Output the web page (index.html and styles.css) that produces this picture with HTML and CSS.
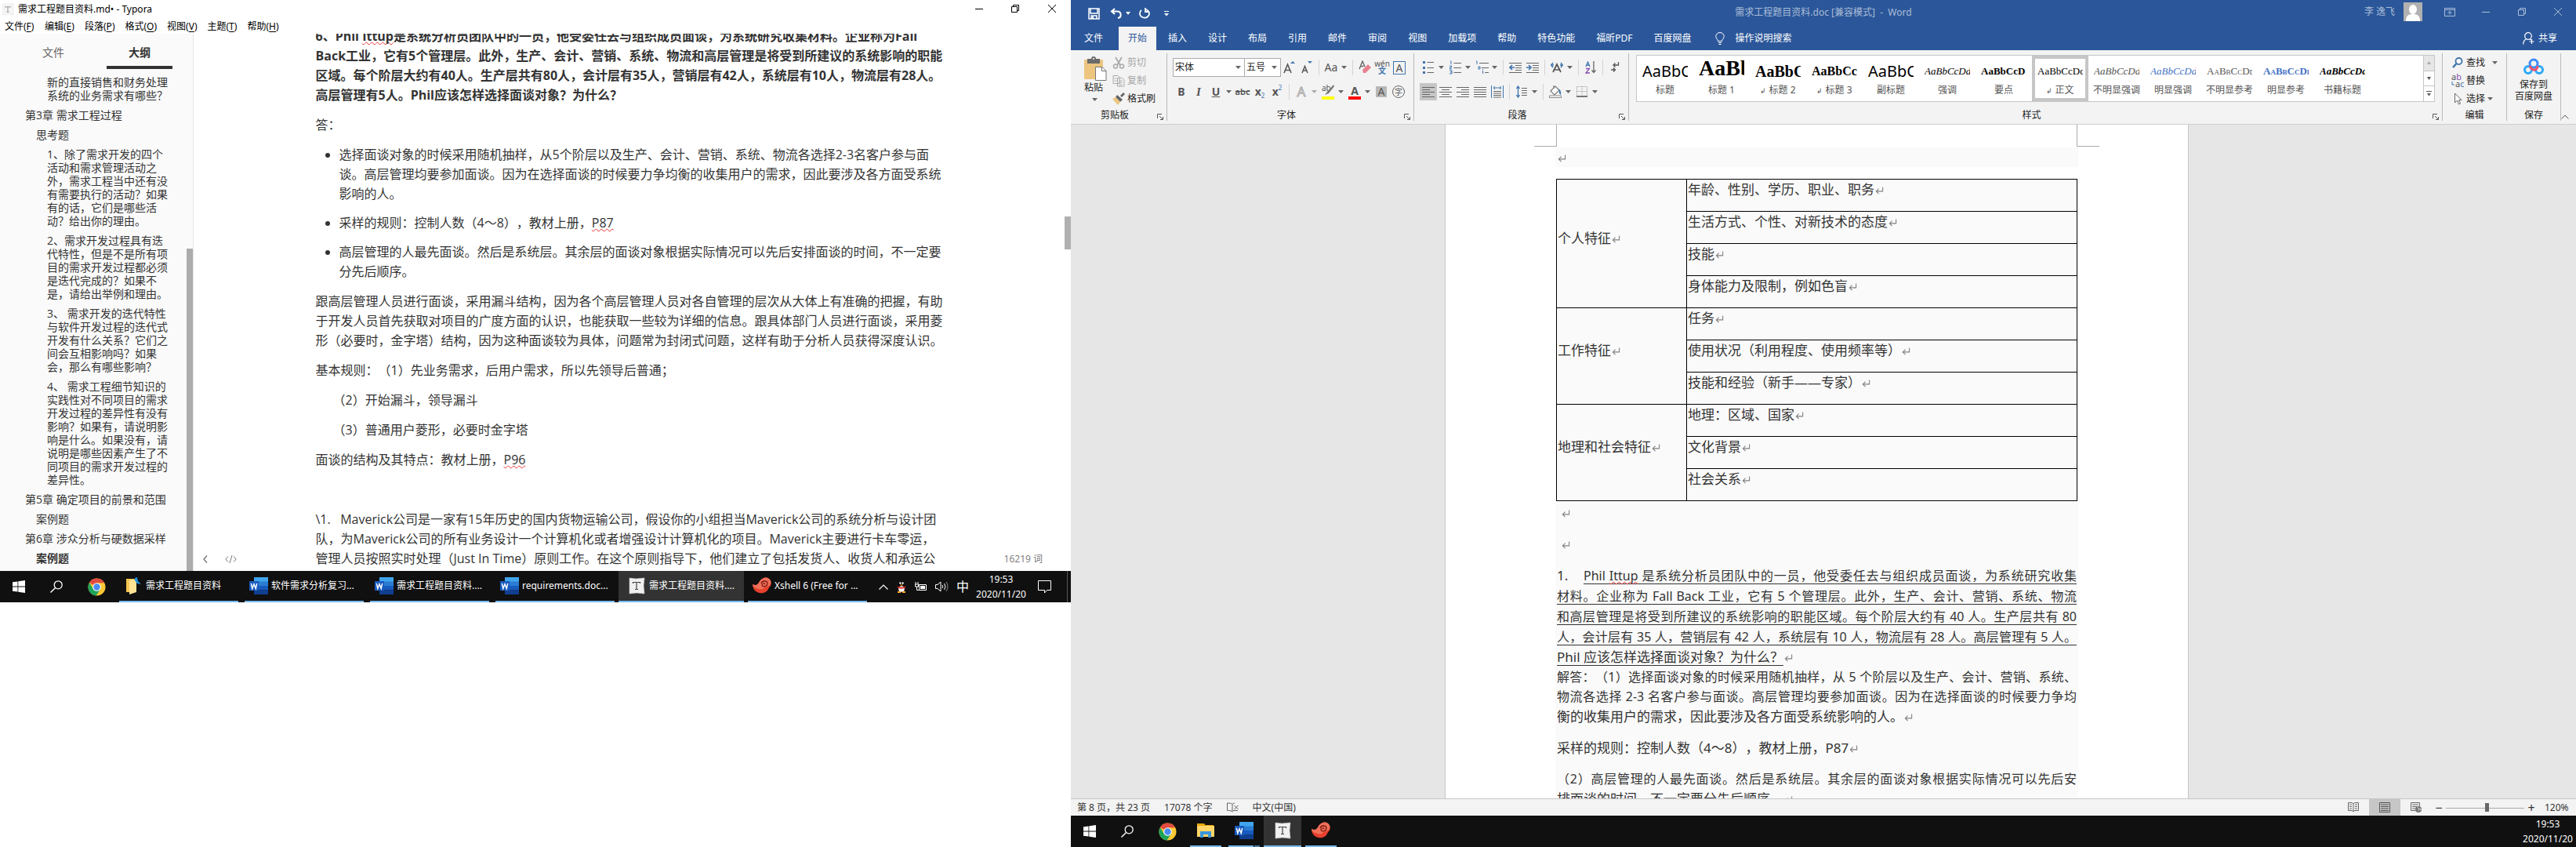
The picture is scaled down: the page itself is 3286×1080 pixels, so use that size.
FILE: index.html
```html
<!DOCTYPE html>
<html lang="zh-CN">
<head>
<meta charset="utf-8">
<title>桌面</title>
<link rel="stylesheet" href="styles.css">
</head>
<body>
<svg class="defs" aria-hidden="true">
  <symbol id="caret" viewBox="0 0 7 4"><path d="M0 0h7L3.500 4z" fill="#666"/></symbol>
  <symbol id="min" viewBox="0 0 10 10"><path d="M0 5.500h10" stroke="currentColor" fill="none"/></symbol>
  <symbol id="restore" viewBox="0 0 10 10"><path d="M.5 2.500h7v7h-7zM2.500 2.500v-2h7v7h-2" stroke="currentColor" fill="none"/></symbol>
  <symbol id="close" viewBox="0 0 10 10"><path d="M0 0l10 10M10 0L0 10" stroke="currentColor" fill="none"/></symbol>
  <symbol id="launch" viewBox="0 0 8 8"><path d="M.5 6V.5H6M3 3l4 4M7.500 4v3.500H4" stroke="#555" fill="none"/></symbol>
  <symbol id="ret" viewBox="0 0 12 10"><path d="M10.500 0v6H2M5 2.500L1.500 6 5 9.500" stroke="#808080" stroke-width="1.200" fill="none"/></symbol>
  <symbol id="win" viewBox="0 0 16 16"><path d="M0 2.300L6.500 1.400v6.100H0zM7.300 1.300L16 0v7.500H7.300zM0 8.400h6.500v6.200L0 13.700zM7.300 8.400H16V16l-8.700-1.300z" fill="#fff"/></symbol>
  <symbol id="search" viewBox="0 0 16 16"><circle cx="10.200" cy="5.800" r="5" stroke="#fff" stroke-width="1.300" fill="none"/><path d="M6.600 9.400L.5 15.500" stroke="#fff" stroke-width="1.400"/></symbol>
  <symbol id="chrome" viewBox="0 0 24 24"><circle cx="12" cy="12" r="11.500" fill="#fbc934"/><path d="M12 12L2 6.300A11.500 11.500 0 0 1 22 6.500H12z" fill="#e04a3f"/><path d="M2 6.300A11.500 11.500 0 0 0 11 23.500L16.700 14.800 12 12 7.300 14.500z" fill="#1da35a"/><circle cx="12" cy="12" r="5.500" fill="#fff"/><circle cx="12" cy="12" r="4.400" fill="#4a8af4"/></symbol>
  <symbol id="folder" viewBox="0 0 22 20"><path d="M0 1h9l1.500 2H21v4H0z" fill="#e8a80c"/><path d="M0 4h22v14H0z" fill="#ffd667"/><path d="M4 19v-8h14v8h-4v-4H8v4z" fill="#3c96dc"/></symbol>
  <symbol id="folder2" viewBox="0 0 20 22"><path d="M1 2h10v17H1z" fill="#f3c44f"/><path d="M5 4l9-2v17l-9 3z" fill="#ffe294"/><path d="M12 1l3-1 1 5 4 4-5-1-3-4z" fill="#1e90e4"/></symbol>
  <symbol id="word" viewBox="0 0 24 22"><path d="M6 0h18v6H6z" fill="#41a5ee"/><path d="M6 5.500h18V11H6z" fill="#2b7cd3"/><path d="M6 11h18v5.500H6z" fill="#185abd"/><path d="M6 16.500h18V22H6z" fill="#103f91"/><path d="M0 5h12v12H0z" fill="#185abd"/><path d="M2.300 7.800l1.500 6.600L6 8.800l2.200 5.600 1.500-6.600" stroke="#fff" stroke-width="1.500" fill="none"/></symbol>
  <symbol id="typ" viewBox="0 0 22 22"><path d="M2 1l8 1 11-1-1 10 1 10-10-1-9 1 0-9z" fill="#f0f0f0" stroke="#ccc" stroke-width=".6"/><path d="M6.500 8V6.500h9V8M11 6.500v9M9 15.500h4" stroke="#444" stroke-width="1.200" fill="none"/></symbol>
  <symbol id="xsh" viewBox="0 0 24 22"><path d="M0 9c4 2 6 1 8-2 3-6 9-8 13-5 4 3 3 9 0 11-2 6-7 8-12 7C3 19 0 14 0 9z" fill="#e8402d"/><path d="M0 9c4 2 6 1 8-2 3-6 9-8 13-5 4 3 3 9-3 10-5 1-4 5-10 3C3 14 0 12 0 9z" fill="#f0705a"/><path d="M11 8c1-4 8-4 8 0s-6 5-7 2c0-2 3-3 4-1" stroke="#7c1a14" stroke-width="1.300" fill="none"/></symbol>
  <symbol id="al" viewBox="0 0 16 14"><path d="M0 1.500h16M0 4.500h10M0 7.500h16M0 10.500h10M0 13.500h16" stroke="#666"/></symbol>
  <symbol id="ac" viewBox="0 0 16 14"><path d="M0 1.500h16M3 4.500h10M0 7.500h16M3 10.500h10M0 13.500h16" stroke="#666"/></symbol>
  <symbol id="ar" viewBox="0 0 16 14"><path d="M0 1.500h16M6 4.500h10M0 7.500h16M6 10.500h10M0 13.500h16" stroke="#666"/></symbol>
  <symbol id="aj" viewBox="0 0 16 14"><path d="M0 1.500h16M0 4.500h16M0 7.500h16M0 10.500h16M0 13.500h16" stroke="#666"/></symbol>
</svg>

<section class="screen left" aria-label="Typora">
  <header class="t-title">
    <svg width="16" height="16"><use href="#typ"/></svg><span>需求工程题目资料.md• - Typora</span>
    <div class="t-ctl">
      <button aria-label="最小化"><svg width="10" height="10"><use href="#min"/></svg></button>
      <button aria-label="还原"><svg width="10" height="10"><use href="#restore"/></svg></button>
      <button aria-label="关闭"><svg width="10" height="10"><use href="#close"/></svg></button>
    </div>
  </header>
  <nav class="t-menu">
    <button>文件(<u>F</u>)</button><button>编辑(<u>E</u>)</button><button>段落(<u>P</u>)</button><button>格式(<u>O</u>)</button><button>视图(<u>V</u>)</button><button>主题(<u>T</u>)</button><button>帮助(<u>H</u>)</button>
  </nav>
  <div class="t-body">
    <aside class="side">
      <div class="side-tabs"><button>文件</button><button class="on">大纲</button></div>
      <nav class="outline">
        <a href="#a" class="l3">新的直接销售和财务处理<br>系统的业务需求有哪些？</a>
        <a href="#a" class="l1">第3章 需求工程过程</a>
        <a href="#a" class="l2">思考题</a>
        <a href="#a" class="l3">1、除了需求开发的四个<br>活动和需求管理活动之<br>外，需求工程当中还有没<br>有需要执行的活动？如果<br>有的话，它们是哪些活<br>动？给出你的理由。</a>
        <a href="#a" class="l3">2、需求开发过程具有迭<br>代特性，但是不是所有项<br>目的需求开发过程都必须<br>是迭代完成的？如果不<br>是，请给出举例和理由。</a>
        <a href="#a" class="l3">3、 需求开发的迭代特性<br>与软件开发过程的迭代式<br>开发有什么关系？它们之<br>间会互相影响吗？如果<br>会，那么有哪些影响？</a>
        <a href="#a" class="l3">4、 需求工程细节知识的<br>实践性对不同项目的需求<br>开发过程的差异性有没有<br>影响？如果有，请说明影<br>响是什么。如果没有，请<br>说明是哪些因素产生了不<br>同项目的需求开发过程的<br>差异性。</a>
        <a href="#a" class="l1">第5章 确定项目的前景和范围</a>
        <a href="#a" class="l2">案例题</a>
        <a href="#a" class="l1">第6章 涉众分析与硬数据采样</a>
        <a href="#a" class="l2 cur">案例题</a>
      </nav>
      <div class="thumb side-thumb"></div>
    </aside>
    <main class="edit">
      <article id="a">
        <p><b>6、Phil <span class="sp">Ittup</span>是系统分析员团队中的一员，他受委任去与组织成员面谈，为系统研究收集材料。企业称为Fall<br>Back工业，它有5个管理层。此外，生产、会计、营销、系统、物流和高层管理是将受到所建议的系统影响的职能<br>区域。每个阶层大约有40人。生产层共有80人，会计层有35人，营销层有42人，系统层有10人，物流层有28人。<br>高层管理有5人。Phil应该怎样选择面谈对象？为什么？</b></p>
        <p>答：</p>
        <ul>
          <li>选择面谈对象的时候采用随机抽样，从5个阶层以及生产、会计、营销、系统、物流各选择2-3名客户参与面<br>谈。高层管理均要参加面谈。因为在选择面谈的时候要力争均衡的收集用户的需求，因此要涉及各方面受系统<br>影响的人。</li>
          <li>采样的规则：控制人数（4～8），教材上册，<span class="sp">P87</span></li>
          <li>高层管理的人最先面谈。然后是系统层。其余层的面谈对象根据实际情况可以先后安排面谈的时间，不一定要<br>分先后顺序。</li>
        </ul>
        <p>跟高层管理人员进行面谈，采用漏斗结构，因为各个高层管理人员对各自管理的层次从大体上有准确的把握，有助<br>于开发人员首先获取对项目的广度方面的认识，也能获取一些较为详细的信息。跟具体部门人员进行面谈，采用菱<br>形（必要时，金字塔）结构，因为这种面谈较为具体，问题常为封闭式问题，这样有助于分析人员获得深度认识。</p>
        <p>基本规则：（1）先业务需求，后用户需求，所以先领导后普通；</p>
        <p class="in">（2）开始漏斗，领导漏斗</p>
        <p class="in">（3）普通用户菱形，必要时金字塔</p>
        <p>面谈的结构及其特点：教材上册，<span class="sp">P96</span></p>
        <p>&nbsp;</p>
        <p>\1. &nbsp; Maverick公司是一家有15年历史的国内货物运输公司，假设你的小组担当Maverick公司的系统分析与设计团<br>队，为Maverick公司的所有业务设计一个计算机化或者增强设计计算机化的项目。Maverick主要进行卡车零运，<br>管理人员按照实时处理（Just In Time）原则工作。在这个原则指导下，他们建立了包括发货人、收货人和承运公</p>
      </article>
      <footer class="t-foot">
        <button aria-label="侧栏"><svg width="6" height="10" viewBox="0 0 6 10"><path d="M5 .5L1 5l4 4.500" stroke="#777" stroke-width="1.400" fill="none"/></svg></button>
        <button aria-label="源代码模式"><svg width="15" height="10" viewBox="0 0 15 10"><path d="M4 1.500L.8 5 4 8.500M11 1.500L14.200 5 11 8.500M9 0L6 10" stroke="#777" fill="none"/></svg></button>
        <span class="words">16219 词</span>
      </footer>
      <div class="thumb"></div>
    </main>
  </div>
  <footer class="bar">
    <button class="tb" aria-label="开始"><svg width="16" height="16"><use href="#win"/></svg></button>
    <button class="tb" aria-label="搜索"><svg width="16" height="16"><use href="#search"/></svg></button>
    <button class="tb chr" aria-label="Chrome"><svg width="23" height="23"><use href="#chrome"/></svg></button>
    <div class="tasks">
      <button class="task"><svg width="20" height="22"><use href="#folder2"/></svg>需求工程题目资料</button>
      <button class="task"><svg width="24" height="22"><use href="#word"/></svg>软件需求分析复习...</button>
      <button class="task"><svg width="24" height="22"><use href="#word"/></svg>需求工程题目资料....</button>
      <button class="task"><svg width="24" height="22"><use href="#word"/></svg>requirements.doc...</button>
      <button class="task act"><svg width="22" height="22"><use href="#typ"/></svg>需求工程题目资料....</button>
      <button class="task"><svg width="24" height="22"><use href="#xsh"/></svg>Xshell 6 (Free for ...</button>
    </div>
    <div class="tray">
      <svg width="12" height="7" viewBox="0 0 12 7"><path d="M.5 6.500L6 1l5.500 5.500" stroke="#fff" stroke-width="1.200" fill="none"/></svg>
      <svg width="14" height="16" viewBox="0 0 14 16"><ellipse cx="7" cy="8" rx="5.500" ry="7.500" fill="#000" stroke="#333" stroke-width=".5"/><circle cx="5.400" cy="3.500" r="1.200" fill="#fff"/><circle cx="8.600" cy="3.500" r="1.200" fill="#fff"/><path d="M4.500 5.500h5L7 7z" fill="#f5a623"/><ellipse cx="7" cy="11" rx="3.800" ry="3.800" fill="#fff"/><path d="M2 7.500c3 1.600 7 1.600 10 0v2c-3 1.500-7 1.500-10 0z" fill="#e2231a"/><path d="M2 15h4M8 15h4" stroke="#f5a623" stroke-width="2"/></svg>
      <svg width="16" height="12" viewBox="0 0 16 12"><path d="M5.500 3.500h9v7h-9z" stroke="#fff" fill="none"/><path d="M7 5h6v4H7z" fill="#fff"/><path d="M1 0v3M4 0v3M.5 3h4v3h-4zM2.500 6v4.500h3" stroke="#fff" fill="none"/></svg>
      <svg width="17" height="14" viewBox="0 0 17 14"><path d="M.5 4.500H3L7 1v12L3 9.500H.5z" stroke="#fff" fill="none"/><path d="M9 5q1.500 2 0 4M11.500 3q3 4 0 8" stroke="#fff" fill="none"/><path d="M14 1q4 6 0 12" stroke="#888" fill="none"/></svg>
      <span class="ime">中</span>
    </div>
    <div class="clock"><span>19:53</span><span>2020/11/20</span></div>
    <button class="note" aria-label="通知"><svg width="17" height="17" viewBox="0 0 17 17"><path d="M.5.500h16v12h-5l-3 3.500v-3.500h-8z" stroke="#fff" fill="none"/></svg></button>
  </footer>
</section>

<section class="screen right" aria-label="Word">
  <header class="w-head">
    <div class="w-top">
      <div class="qat">
        <button aria-label="保存"><svg width="15" height="15" viewBox="0 0 15 15"><path d="M1 1h13v13H1zM3 1v6h9V1M4 14v-4h7v4" stroke="#fff" stroke-width="1.500" fill="none"/><path d="M5 11h2v3H5z" fill="#fff"/></svg></button>
        <button aria-label="撤消"><svg width="16" height="14" viewBox="0 0 16 14"><path d="M6 1L2 4.500 6 8M2 4.500h7c6 0 6 8 1 8.500" stroke="#fff" stroke-width="2" fill="none"/></svg></button>
        <svg class="q-car" width="6" height="4" viewBox="0 0 6 4"><path d="M0 0h6L3 4z" fill="#fff"/></svg>
        <button aria-label="恢复"><svg width="14" height="14" viewBox="0 0 14 14"><path d="M9 2a6 5.500 0 1 1-6 1M8 0v5h5" stroke="#fff" stroke-width="1.800" fill="none"/></svg></button>
        <button aria-label="自定义"><svg width="6" height="7" viewBox="0 0 6 7"><path d="M0 .5h6" stroke="#fff"/><path d="M0 3h6L3 6.500z" fill="#fff"/></svg></button>
      </div>
      <div class="w-name">需求工程题目资料.doc [兼容模式]&nbsp; -&nbsp; Word</div>
      <div class="w-user"><span>李 逸飞</span>
        <svg class="ava" width="24" height="24" viewBox="0 0 24 24"><path d="M0 0h24v24H0z" fill="#b1b1b1"/><ellipse cx="12" cy="9" rx="5" ry="6" fill="#fff"/><path d="M3 24c0-7 3-9 9-9s9 2 9 9z" fill="#fff"/></svg>
        <button aria-label="功能区显示选项"><svg width="14" height="11" viewBox="0 0 14 11"><path d="M.5.500h13v10H.5zM.5 2.500h13M7 9V4.500M4.500 7L7 4.500 9.500 7" stroke="currentColor" fill="none"/></svg></button>
        <button aria-label="最小化"><svg width="10" height="10"><use href="#min"/></svg></button>
        <button aria-label="还原"><svg width="10" height="10"><use href="#restore"/></svg></button>
        <button aria-label="关闭"><svg width="10" height="10"><use href="#close"/></svg></button>
      </div>
    </div>
    <nav class="w-tabs">
      <button class="file">文件</button><button class="on">开始</button><button>插入</button><button>设计</button><button>布局</button><button>引用</button><button>邮件</button><button>审阅</button><button>视图</button><button>加载项</button><button>帮助</button><button>特色功能</button><button>福昕PDF</button><button>百度网盘</button>
      <button class="tell"><svg width="12" height="16" viewBox="0 0 12 16"><path d="M3.500 11.500C3.500 9 .8 8.500.8 5.500a5.200 5 0 0 1 10.400 0c0 3-2.700 3.500-2.700 6zM4 13.500h4M4.500 15.500h3" stroke="#fff" fill="none"/></svg>操作说明搜索</button>
      <button class="share"><svg width="15" height="16" viewBox="0 0 15 16"><circle cx="7" cy="5" r="4.300" stroke="#fff" stroke-width="1.200" fill="none"/><path d="M.7 15.500c0-4 2-6 4.500-7M9 9l2 1M11.500 9v6M8.500 12h6" stroke="#fff" stroke-width="1.200" fill="none"/></svg>共享</button>
    </nav>
  </header>
  <div class="ribbon">
    <div class="grp g1">
      <div class="clip">
        <button class="paste"><svg width="29" height="31" viewBox="0 0 29 31"><path d="M0 4h24v25H0z" fill="#edc57f"/><path d="M4 3h16v6H4z" fill="#6b6b6b"/><circle cx="12" cy="3" r="3" fill="#6b6b6b"/><circle cx="12" cy="3" r="1" fill="#fff"/><path d="M14.500 13.500H23l5 5v12H14.500z" fill="#fff" stroke="#777"/><path d="M22.500 13.500v5H28" stroke="#777" fill="none"/></svg><span>粘贴</span><svg width="7" height="4"><use href="#caret"/></svg></button>
        <div class="stack">
          <button class="dis"><svg width="16" height="16" viewBox="0 0 16 16"><path d="M4 1l6 10M12 1L6 11" stroke="#aaa" stroke-width="1.800"/><circle cx="4" cy="12.500" r="2.500" stroke="#aaa" stroke-width="1.500" fill="none"/><circle cx="12" cy="12.500" r="2.500" stroke="#aaa" stroke-width="1.500" fill="none"/></svg>剪切</button>
          <button class="dis"><svg width="16" height="16" viewBox="0 0 16 16"><path d="M1 1.500h6l2 2v8H1zM6.500 4.500h6l2.500 2.500v8H6.500z" fill="#f3f3f3" stroke="#aaa"/><path d="M8.500 8h4M8.500 10.500h4M8.500 13h4M2.500 5h3M2.500 8h3" stroke="#aaa"/></svg>复制</button>
          <button><svg width="16" height="16" viewBox="0 0 16 16"><path d="M10 4l4-4 2 2-4 4z" fill="#666"/><path d="M6 3l7 6-3 3-6-6z" fill="#666"/><path d="M0 8l4-2 6 6-3 4z" fill="#edc57f"/></svg>格式刷</button>
        </div>
      </div>
      <div class="lab"><span>剪贴板</span><svg width="8" height="8"><use href="#launch"/></svg></div>
    </div>
    <div class="grp g2">
      <div class="rows">
        <div class="row">
          <label class="combo c1"><select aria-label="字体"><option>宋体</option></select><svg width="7" height="4"><use href="#caret"/></svg></label><label class="combo c2"><select aria-label="字号"><option>五号</option></select><svg width="7" height="4"><use href="#caret"/></svg></label>
          <button class="ic" aria-label="增大字号"><svg width="16" height="18" viewBox="0 0 16 18"><path d="M1 16L5.500 5 10 16M2.800 12.500h5.400" stroke="#555" stroke-width="1.600" fill="none"/><path d="M9 4h6l-3-3z" fill="#3f74ad"/></svg></button><button class="ic" aria-label="减小字号"><svg width="16" height="18" viewBox="0 0 16 18"><path d="M2 16L5.500 7.500 9 16M3.500 13h4" stroke="#555" stroke-width="1.500" fill="none"/><path d="M9 1h6l-3 3z" fill="#3f74ad"/></svg></button><i class="sep"></i>
          <button class="ic">Aa</button><span class="cr"><svg width="7" height="4"><use href="#caret"/></svg></span><i class="sep"></i>
          <button class="ic" aria-label="清除格式"><svg width="16" height="18" viewBox="0 0 16 18"><path d="M1 11L5 1l3 7M2.500 7.500h4" stroke="#666" stroke-width="1.400" fill="none"/><path d="M5 12l7-7 4 4-7 7H6z" fill="#e8808e"/></svg></button>
          <button class="ic pin"><span>wén</span><b>文</b></button>
          <button class="ic"><span class="abox">A</span></button>
        </div>
        <div class="row">
          <button class="ic"><b>B</b></button><button class="ic ser"><b><i>I</i></b></button><button class="ic"><b><u>U</u></b></button><span class="cr"><svg width="7" height="4"><use href="#caret"/></svg></span>
          <button class="ic xs"><s>abc</s></button><button class="ic"><b>x</b><sub>2</sub></button><button class="ic"><b>x</b><sup>2</sup></button><i class="sep"></i>
          <button class="ic glow">A</button><span class="cr dim"><svg width="7" height="4"><use href="#caret"/></svg></span>
          <button class="ic" aria-label="突出显示"><svg width="16" height="20" viewBox="0 0 16 20"><text x="0" y="9" font-size="10" fill="#555">ab</text><path d="M15 1l-8 9-3 4 5-2 7-9z" fill="#777"/><path d="M0 16h16v4H0z" fill="#ff0"/></svg></button><span class="cr"><svg width="7" height="4"><use href="#caret"/></svg></span>
          <button class="ic red"><b>A</b></button><span class="cr"><svg width="7" height="4"><use href="#caret"/></svg></span>
          <button class="ic"><span class="ashade">A</span></button><button class="ic"><span class="circ">字</span></button>
        </div>
      </div>
      <div class="lab"><span>字体</span><svg width="8" height="8"><use href="#launch"/></svg></div>
    </div>
    <div class="grp g3">
      <div class="rows">
        <div class="row">
          <button class="ic" aria-label="项目符号"><svg width="14" height="16" viewBox="0 0 14 16"><path d="M0 1.500h3M0 8.500h3M0 14.500h3" stroke="#3f74ad" stroke-width="3"/><path d="M5.500 1.500H14M5.500 8.500H14M5.500 14.500H14" stroke="#666"/></svg></button><span class="cr"><svg width="7" height="4"><use href="#caret"/></svg></span>
          <button class="ic" aria-label="编号"><svg width="15" height="18" viewBox="0 0 15 18"><path d="M1 1h1v4M0 7h2.500v2H.5v2h2.500M0 13h3v4H0M1 15h2" stroke="#3f74ad" fill="none"/><path d="M5.500 3.500H15M5.500 9.500H15M5.500 15.500H15" stroke="#666"/></svg></button><span class="cr"><svg width="7" height="4"><use href="#caret"/></svg></span>
          <button class="ic" aria-label="多级列表"><svg width="17" height="18" viewBox="0 0 17 18"><path d="M1 1h1v4M4 8h2v3H4zM9.500 13v4M9.500 11v1" stroke="#3f74ad" fill="none"/><path d="M5 3.500h12M8 9.500h9M12 15.500h5" stroke="#666"/></svg></button><span class="cr"><svg width="7" height="4"><use href="#caret"/></svg></span><i class="sep"></i>
          <button class="ic" aria-label="减少缩进"><svg width="16" height="14" viewBox="0 0 16 14"><path d="M0 1.500h16M8 4.500h8M8 7.500h8M8 10.500h8M0 13.500h16" stroke="#666"/><path d="M7 7H1M4 4L1 7l3 3" stroke="#3f74ad" stroke-width="1.700" fill="none"/></svg></button>
          <button class="ic" aria-label="增加缩进"><svg width="16" height="14" viewBox="0 0 16 14"><path d="M0 1.500h16M8 4.500h8M8 7.500h8M8 10.500h8M0 13.500h16" stroke="#666"/><path d="M0 7h6M3 4l3 3-3 3" stroke="#3f74ad" stroke-width="1.700" fill="none"/></svg></button><i class="sep"></i>
          <button class="ic" aria-label="中文版式"><svg width="16" height="14" viewBox="0 0 16 14"><path d="M3 13L8 3l5 10M5 10h6" stroke="#555" stroke-width="1.700" fill="none"/><path d="M4 4H1M3 1L.7 4 3 7M12 4h3M13 1l2.300 3L13 7" stroke="#3f74ad" stroke-width="1.400" fill="none"/></svg></button><span class="cr"><svg width="7" height="4"><use href="#caret"/></svg></span><i class="sep"></i>
          <button class="ic" aria-label="排序"><svg width="15" height="16" viewBox="0 0 15 16"><path d="M1 7l2.500-6L6 7M2 5h3" stroke="#3f74ad" stroke-width="1.300" fill="none"/><path d="M1 9.500h4.500L1 15h5" stroke="#8a50b0" stroke-width="1.300" fill="none"/><path d="M11 0v14M8.500 11.500L11 14.500l2.500-3" stroke="#666" stroke-width="1.300" fill="none"/></svg></button><i class="sep"></i>
          <button class="ic" aria-label="显示标记"><svg width="12" height="14" viewBox="0 0 12 14"><path d="M10.500 0v4H4M6.500 1.500L4 4l2.500 2.500M1 10h5M4 7.500L6.500 10 4 12.500" stroke="#555" stroke-width="1.300" fill="none"/></svg></button>
        </div>
        <div class="row">
          <button class="ic sel" aria-label="左对齐"><svg width="16" height="14"><use href="#al"/></svg></button><button class="ic" aria-label="居中"><svg width="16" height="14"><use href="#ac"/></svg></button><button class="ic" aria-label="右对齐"><svg width="16" height="14"><use href="#ar"/></svg></button><button class="ic" aria-label="两端对齐"><svg width="16" height="14"><use href="#aj"/></svg></button>
          <button class="ic" aria-label="分散对齐"><svg width="16" height="16" viewBox="0 0 16 16"><path d="M.5 0v16M15.500 0v16M3 3h10M5 1L3 3l2 2M11 1l2 2-2 2" stroke="#3f74ad" fill="none"/><path d="M3 7.500h10M3 10h10M3 12.500h10M3 15h10" stroke="#666"/></svg></button><i class="sep"></i>
          <button class="ic" aria-label="行距"><svg width="14" height="16" viewBox="0 0 14 16"><path d="M2.500 1v14M.5 4l2-3 2 3M.5 12l2 3 2-3" stroke="#3f74ad" stroke-width="1.300" fill="none"/><path d="M7 3.500h7M7 6.500h7M7 9.500h7M7 12.500h7" stroke="#666"/></svg></button><span class="cr"><svg width="7" height="4"><use href="#caret"/></svg></span><i class="sep"></i>
          <button class="ic" aria-label="底纹"><svg width="16" height="16" viewBox="0 0 16 16"><path d="M2 7l6-6 5 5-6 6zM6 4V0" stroke="#777" stroke-width="1.200" fill="#fff"/><path d="M11 4q5 1 4 8-3-2-2-6z" fill="#3f74ad"/><path d="M.5 13h15v2.500H.5z" fill="#fff" stroke="#888"/></svg></button><span class="cr"><svg width="7" height="4"><use href="#caret"/></svg></span>
          <button class="ic" aria-label="边框"><svg width="14" height="14" viewBox="0 0 14 14"><path d="M.5.500h13v12H.5zM7 0v13M0 6.500h14" stroke="#999" stroke-dasharray="1 1" fill="none"/><path d="M0 13h14" stroke="#555" stroke-width="1.500"/></svg></button><span class="cr"><svg width="7" height="4"><use href="#caret"/></svg></span>
        </div>
      </div>
      <div class="lab"><span>段落</span><svg width="8" height="8"><use href="#launch"/></svg></div>
    </div>
    <div class="grp g4">
      <div class="gal">
        <div class="items">
          <button><span class="pv s20">AaBbCc</span><em>标题</em></button>
          <button><span class="pv f28">AaBbC</span><em>标题 1</em></button>
          <button><span class="pv f20">AaBbC</span><em><small>↲</small> 标题 2</em></button>
          <button><span class="pv f16">AaBbCc</span><em><small>↲</small> 标题 3</em></button>
          <button><span class="pv s20">AaBbCc</span><em>副标题</em></button>
          <button><span class="pv f13 it">AaBbCcDd</span><em>强调</em></button>
          <button><span class="pv f13 bo">AaBbCcD</span><em>要点</em></button>
          <button class="pick"><span class="pv f13">AaBbCcDd</span><em><small>↲</small> 正文</em></button>
          <button><span class="pv f13 it gr">AaBbCcDd</span><em>不明显强调</em></button>
          <button><span class="pv f13 it bl">AaBbCcDd</span><em>明显强调</em></button>
          <button><span class="pv f13 sc gr">AaBbCcDd</span><em>不明显参考</em></button>
          <button><span class="pv f13 sc bo bl">AaBbCcDd</span><em>明显参考</em></button>
          <button><span class="pv f13 it bo">AaBbCcDd</span><em>书籍标题</em></button>
        </div>
        <div class="gsb">
          <button class="off" aria-label="上"><svg width="5" height="4" viewBox="0 0 5 4"><path d="M0 4h5L2.500 0z" fill="#aaa"/></svg></button>
          <button aria-label="下"><svg width="5" height="4" viewBox="0 0 5 4"><path d="M0 0h5L2.500 4z" fill="#555"/></svg></button>
          <button aria-label="更多"><svg width="7" height="7" viewBox="0 0 7 7"><path d="M0 .5h7" stroke="#555"/><path d="M1 3h5L3.500 6.500z" fill="#555"/></svg></button>
        </div>
      </div>
      <div class="lab"><span>样式</span><svg width="8" height="8"><use href="#launch"/></svg></div>
    </div>
    <div class="grp g5">
      <div class="stack">
        <button><svg width="16" height="14" viewBox="0 0 16 14"><circle cx="9.500" cy="5" r="4" stroke="#3f74ad" stroke-width="1.800" fill="#fff"/><path d="M6.500 8L2 13" stroke="#3f74ad" stroke-width="2.500"/></svg>查找<svg class="gap" width="7" height="4"><use href="#caret"/></svg></button>
        <button><svg width="16" height="18" viewBox="0 0 16 18"><text x="0" y="8" font-size="11" fill="#555">a<tspan fill="#8a50b0">b</tspan></text><text x="5" y="17" font-size="11" fill="#555">a<tspan fill="#3f74ad">c</tspan></text><path d="M1 10v4h3" stroke="#3f74ad" fill="none"/></svg>替换</button>
        <button><svg width="16" height="16" viewBox="0 0 16 16"><path d="M4.500 1v12l3-3 2 5 2-1-2-4.500h3.500z" stroke="#666" fill="#fff"/></svg>选择<svg width="7" height="4"><use href="#caret"/></svg></button>
      </div>
      <div class="lab"><span>编辑</span></div>
    </div>
    <div class="grp g6">
      <button class="pan"><svg width="26" height="22" viewBox="0 0 26 22"><circle cx="6" cy="15" r="4.500" stroke="#2aa9fb" stroke-width="3" fill="none"/><circle cx="20" cy="15" r="4.500" stroke="#2aa9fb" stroke-width="3" fill="none"/><circle cx="13" cy="7" r="5" stroke="#3b8cf8" stroke-width="3" fill="none"/><path d="M8.500 10q0 4 4.500 5t5-5" stroke="#f0516c" stroke-width="3" fill="none"/></svg><span>保存到<br>百度网盘</span></button>
      <div class="lab"><span>保存</span></div>
    </div>
    <button class="fold" aria-label="折叠功能区"><svg width="10" height="6" viewBox="0 0 10 6"><path d="M.5 5.500L5 1l4.500 4.500" stroke="#555" fill="none"/></svg></button>
  </div>
  <main class="work">
    <div class="page">
      <div class="crop"><i></i><i></i></div>
      <p class="sh"><svg class="ret"><use href="#ret"/></svg></p>
      <table>
        <tr><td rowspan="4" class="k">个人特征<svg class="ret"><use href="#ret"/></svg></td><td>年龄、性别、学历、职业、职务<svg class="ret"><use href="#ret"/></svg></td></tr>
        <tr><td>生活方式、个性、对新技术的态度<svg class="ret"><use href="#ret"/></svg></td></tr>
        <tr><td>技能<svg class="ret"><use href="#ret"/></svg></td></tr>
        <tr><td>身体能力及限制，例如色盲<svg class="ret"><use href="#ret"/></svg></td></tr>
        <tr><td rowspan="3" class="k">工作特征<svg class="ret"><use href="#ret"/></svg></td><td>任务<svg class="ret"><use href="#ret"/></svg></td></tr>
        <tr><td>使用状况（利用程度、使用频率等）<svg class="ret"><use href="#ret"/></svg></td></tr>
        <tr><td>技能和经验（新手——专家）<svg class="ret"><use href="#ret"/></svg></td></tr>
        <tr><td rowspan="3" class="k">地理和社会特征<svg class="ret"><use href="#ret"/></svg></td><td>地理：区域、国家<svg class="ret"><use href="#ret"/></svg></td></tr>
        <tr><td>文化背景<svg class="ret"><use href="#ret"/></svg></td></tr>
        <tr><td>社会关系<svg class="ret"><use href="#ret"/></svg></td></tr>
      </table>
      <div class="sh flow">
        <p class="lead"><svg class="ret"><use href="#ret"/></svg></p>
        <p class="lead"><svg class="ret"><use href="#ret"/></svg></p>
        <div class="q">
          <div class="first"><span>1.</span><u class="full">Phil <span class="sp">Ittup</span> 是系统分析员团队中的一员，他受委任去与组织成员面谈，为系统研究收集</u></div>
          <u class="full">材料。企业称为 Fall Back 工业，它有 5 个管理层。此外，生产、会计、营销、系统、物流</u>
          <u class="full">和高层管理是将受到所建议的系统影响的职能区域。每个阶层大约有 40 人。生产层共有 80</u>
          <u class="full">人，会计层有 35 人，营销层有 42 人，系统层有 10 人，物流层有 28 人。高层管理有 5 人。</u>
          <div><u>Phil 应该怎样选择面谈对象？为什么？</u><svg class="ret"><use href="#ret"/></svg></div>
        </div>
        <p><span class="full">解答：（1）选择面谈对象的时候采用随机抽样，从 5 个阶层以及生产、会计、营销、系统、</span><span class="full">物流各选择 2-3 名客户参与面谈。高层管理均要参加面谈。因为在选择面谈的时候要力争均</span>衡的收集用户的需求，因此要涉及各方面受系统影响的人。<svg class="ret"><use href="#ret"/></svg></p>
        <p>采样的规则：控制人数（4～8），教材上册，P87<svg class="ret"><use href="#ret"/></svg></p>
        <p><span class="full">（2）高层管理的人最先面谈。然后是系统层。其余层的面谈对象根据实际情况可以先后安</span>排面谈的时间，不一定要分先后顺序。<svg class="ret"><use href="#ret"/></svg></p>
      </div>
    </div>
  </main>
  <footer class="status">
    <span>第 8 页，共 23 页</span><span>17078 个字</span>
    <svg width="15" height="13" viewBox="0 0 15 13"><path d="M7 11.500c-2-1-4-1-6.500-1V1c2.500 0 5 0 6.500 1.500V12.500M7 2.500C8 1.500 9 1 10 1M9.500 4l5 5M14.500 4l-5 5M8 10.500h6" stroke="#666" fill="none"/></svg>
    <span>中文(中国)</span>
    <div class="views">
      <button aria-label="阅读视图"><svg width="14" height="13" viewBox="0 0 14 13"><path d="M.5.500h5L7 2l1.500-1.500h5v10h-5L7 12 5.500 10.500h-5zM7 2v10M2 3h3M2 5.500h3M2 8h3M9 3h3M9 5.500h3M9 8h3" stroke="#666" fill="none"/></svg></button>
      <button class="on" aria-label="页面视图"><svg width="14" height="13" viewBox="0 0 14 13"><path d="M.5.500h13v12H.5zM2 3h10M2 5.500h10M2 8h10M2 10.500h10" stroke="#555" fill="none"/></svg></button>
      <button aria-label="Web 版式"><svg width="14" height="13" viewBox="0 0 14 13"><path d="M6 10.500H.5V.5h11V5M2 3h8M2 5.500h6M2 8h4" stroke="#666" fill="none"/><circle cx="10" cy="9" r="4" fill="#777"/><path d="M9 6.500l2 2-1 2M12 8l1 2" stroke="#f3f3f3" fill="none"/></svg></button>
    </div>
    <div class="zoom"><button>−</button><input type="range" min="0" max="100" value="53" aria-label="缩放"><button>+</button></div>
    <span class="pct">120%</span>
  </footer>
  <footer class="bar">
    <button class="tb" aria-label="开始"><svg width="16" height="16"><use href="#win"/></svg></button>
    <button class="tb" aria-label="搜索"><svg width="16" height="16"><use href="#search"/></svg></button>
    <button class="tb chr" aria-label="Chrome"><svg width="23" height="23"><use href="#chrome"/></svg></button>
    <div class="pins">
      <button class="run" aria-label="文件资源管理器"><svg width="22" height="20"><use href="#folder"/></svg></button>
      <button class="run multi" aria-label="Word"><svg width="24" height="22"><use href="#word"/></svg></button>
      <button class="run act" aria-label="Typora"><svg width="22" height="22"><use href="#typ"/></svg></button>
      <button class="run" aria-label="Xshell"><svg width="24" height="22"><use href="#xsh"/></svg></button>
    </div>
    <div class="clock end"><span>19:53</span><span>2020/11/20</span></div>
  </footer>
</section>
</body>
</html>
```
FILE: styles.css
```css
* { box-sizing: border-box; }
body {
  margin: 0; background: #fff; display: flex; align-items: flex-start; overflow: hidden;
  font: 12px/16px "Noto Sans", "Noto Sans CJK SC", sans-serif; color: #222;
  text-spacing-trim: space-all;
}
button { border: 0; padding: 0; background: none; font: inherit; color: inherit; white-space: nowrap; display: flex; align-items: center; justify-content: center; }
svg { display: block; flex: none; }
p { margin: 0; }
.defs { position: absolute; width: 0; height: 0; }
.screen { min-width: 0; display: flex; flex-direction: column; overflow: hidden; }
.left { flex: 1366 1 0; aspect-ratio: 1366 / 768; }
.right { flex: 1920 1 0; aspect-ratio: 1920 / 1080; }

/* Typora */
.t-title { height: 24px; flex: none; display: flex; align-items: center; gap: 5px; padding-left: 2px; color: #000; }
.t-title > svg { opacity: .6; }
.t-ctl { display: flex; margin-left: auto; align-self: flex-start; }
.t-ctl button { width: 46px; height: 21px; }
.t-ctl button:last-child { width: 48px; }
.t-menu { height: 19px; flex: none; display: flex; align-items: center; gap: 13px; padding-left: 6px; color: #000; }
.t-menu button { min-width: 38px; justify-content: flex-start; }
.t-menu u { text-underline-offset: 2px; }
.t-body { flex: 1; min-height: 0; display: flex; }
.side { width: 247px; flex: none; position: relative; background: #fafafa; border-right: 1px solid #e8e8e8; overflow: hidden; font: 14px/17px "Open Sans", "Noto Sans CJK SC", sans-serif; color: #333; }
.side-tabs { display: flex; gap: 26px; padding: 10px 0 0 26px; margin-bottom: 8px; }
.side-tabs button { width: 84px; height: 35px; padding-bottom: 4px; border-bottom: 4px solid transparent; color: #666; }
.side-tabs .on { font-weight: bold; color: #333; border-color: #333; }
.outline { display: flex; flex-direction: column; gap: 8px; white-space: nowrap; }
.outline a { color: inherit; text-decoration: none; }
.l1 { padding-left: 32px; }
.l2 { padding-left: 46px; }
.l3 { padding-left: 60px; }
.cur { font-weight: bold; }
.thumb { position: absolute; right: 0; top: 34%; width: 8px; height: 42px; background: #b0b0b0; }
.side .side-thumb { top: 40%; bottom: 0; height: auto; background: #acacac; }
.edit { flex: 1; min-width: 0; position: relative; overflow: hidden; padding-right: 8px; }
.edit article { max-width: 860px; margin: -9px auto 0; padding: 0 30px; font: 16px/25px "Open Sans", "Noto Sans CJK SC", sans-serif; color: #333; white-space: nowrap; }
.edit p, .edit ul { margin: 0 0 13px; }
.edit ul { padding-left: 30px; }
.edit li + li { margin-top: 12px; }
.edit .in { padding-left: 22px; }
.sp { text-decoration: underline wavy #e33 1px; text-underline-offset: 1px; text-decoration-skip-ink: none; }
.t-foot { position: absolute; left: 0; right: 36px; bottom: 0; height: 30px; display: flex; align-items: center; gap: 22px; padding-left: 12px; color: #777; font-family: "Open Sans", "Noto Sans CJK SC", sans-serif; }
.words { margin-left: auto; }

/* taskbars */
.bar { height: 40px; flex: none; background: #101010; color: #fff; display: flex; align-items: stretch; }
.tb { width: 48px; }
.chr { width: 54px; }
.tasks { display: flex; gap: 8px; margin-left: 2px; min-width: 0; }
.task { width: 152px; padding-left: 6px; gap: 4px; justify-content: flex-start; border-bottom: 2px solid #76b9ed; overflow: hidden; }
.task:first-child { padding-left: 8px; gap: 6px; }
.task.act { width: 160px; margin: 0 -3px; padding-left: 12px; background: #333; gap: 5px; }
.tray { display: flex; align-items: center; gap: 10px; margin-left: auto; }
.ime { font-size: 16px; }
.clock { display: flex; flex-direction: column; align-items: center; justify-content: center; line-height: 19px; width: 66px; margin-left: 8px; }
.end { margin: 0 3px 0 auto; }
.note { width: 52px; border-right: 1px solid #555; margin-right: 4px; padding-right: 6px; }
.pins { display: flex; gap: 5px; margin-left: 2px; }
.run { width: 40px; border-bottom: 2px solid #76b9ed; }
.run.multi { margin-left: 4px; border-image: linear-gradient(90deg, #76b9ed 31px, #101010 31px 32px, #4f7ea3 32px) 2; }
.run.act { width: 48px; background: #333; }

/* Word header */
.w-head { height: 64px; flex: none; background: #2b579a; color: #fff; }
.w-top { height: 34px; display: grid; grid-template-columns: 1fr auto 1fr; color: #aabcd7; }
.qat { display: flex; align-items: center; padding-left: 18px; }
.qat button { width: 22px; }
.qat button:nth-child(2) { margin-left: 7px; }
.q-car { margin: 0 6px 0 1px; }
.qat .q-car + button { margin-left: 1px; margin-right: 6px; }
.w-name { align-self: start; line-height: 31px; }
.w-user { display: flex; align-items: center; justify-content: flex-end; height: 30px; }
.ava { margin: 0 12px 0 11px; }
.w-user button { width: 46px; height: 30px; }
.w-tabs { height: 30px; display: flex; gap: 3px; padding-left: 5px; }
.w-tabs button { padding: 0 12px; }
.w-tabs .file { margin-right: 5px; }
.w-tabs .on { background: #f3f3f3; color: #2b579a; }
.w-tabs .tell { gap: 13px; margin-left: 4px; }
.w-tabs .share { margin-left: auto; gap: 5px; padding-right: 24px; }

/* ribbon */
.ribbon { height: 95px; flex: none; display: flex; background: #f3f3f3; border-bottom: 1px solid #cfcfcf; padding: 4px 0; position: relative; }
.grp { display: flex; flex-direction: column; justify-content: space-between; border-right: 1px solid #bababa; padding-bottom: 0; }
.g1 { width: 123px; }
.g2 { width: 315px; }
.g3 { width: 274px; }
.g4 { flex: 1; min-width: 0; }
.g5 { width: 82px; }
.g6 { width: 69px; }
.lab { height: 14px; display: flex; align-items: center; line-height: 14px; }
.lab span { flex: 1; text-align: center; padding-left: 2px; }
.lab svg { margin: 4px 4px 0 0; }
.g5 .lab span, .g6 .lab span { padding: 0; }
.clip { display: flex; padding-left: 17px; }
.paste { flex-direction: column; justify-content: flex-start; padding-top: 4px; }
.paste span { margin: 1px 5px 5px 0; }
.paste svg:last-child { margin-right: 3px; }
.stack { display: flex; flex-direction: column; }
.g1 .stack { margin-left: 7px; }
.stack button { height: 23px; gap: 3px; justify-content: flex-start; }
.dis { color: #a6a6a6; }
.rows { display: flex; flex-direction: column; gap: 9px; padding: 7px 0 0 7px; }
.row { display: flex; height: 22px; align-items: center; }
.combo { position: relative; height: 24px; }
.combo select { appearance: none; width: 100%; height: 100%; border: 1px solid #ababab; border-radius: 0; background: #fff; font: inherit; color: #222; padding: 0 2px; }
.combo svg { position: absolute; right: 5px; top: 10px; }
.c1 { width: 92px; }
.c2 { width: 47px; margin-left: -1px; }
.ic { width: 22px; height: 22px; font-size: 14px; color: #555; flex: none; }
.ic.xs { font-size: 11px; font-weight: 600; }
.ic.ser { font-family: "Liberation Serif", serif; font-size: 15px; }
.ic sup, .ic sub { font-size: 8px; line-height: 8px; color: #3f74ad; }
.ic sup { align-self: flex-start; margin-top: 2px; }
.ic sub { align-self: flex-end; margin-bottom: 2px; }
.ic.sel { background: #c6c6c6; }
.cr { width: 10px; margin-right: 2px; display: flex; justify-content: center; }
.dim { opacity: .5; }
.sep { width: 1px; height: 20px; background: #d4d4d4; margin: 0 4px; }
.ic.pin { flex-direction: column; font-size: 10px; line-height: 9px; }
.pin b { color: #3f74ad; }
.abox { border: 1px solid #3f74ad; width: 16px; line-height: 15px; text-align: center; }
.ashade { background: #b8b8b8; width: 14px; line-height: 14px; text-align: center; }
.circ { border: 1px solid #666; border-radius: 50%; width: 16px; line-height: 14px; font-size: 10px; text-align: center; }
.ic.glow { color: #fff; -webkit-text-stroke: 1px #aaa; font-size: 17px; }
.red b { border-bottom: 4px solid #f00; width: 16px; line-height: 15px; }
.gal { display: flex; height: 60px; margin: 2px 9px 0; border: 1px solid #c6c6c6; background: #fff; }
.items { flex: 1; display: flex; overflow: hidden; }
.items button { width: 72px; flex: none; flex-direction: column; position: relative; justify-content: flex-start; color: #000; }
.pv { width: 58px; height: 40px; overflow: hidden; line-height: 40px; text-align: left; }
.items em { font-style: normal; color: #555; margin-top: -4px; }
.items small { font-size: 9px; }
.pick { outline: 4px solid #c6c6c6; outline-offset: -4px; }
.s20 { font-size: 20px; }
.f28, .f20, .f16, .f13 { font-family: "Liberation Serif", serif; }
.f28 { font-size: 28px; font-weight: bold; line-height: 32px; }
.f20 { font-size: 20px; font-weight: bold; }
.f16 { font-size: 16px; font-weight: bold; }
.f13 { font-size: 13px; }
.it { font-style: italic; }
.bo { font-weight: bold; }
.sc { font-variant: small-caps; }
.gr { color: #555; }
.bl { color: #4472c4; }
.gsb { width: 14px; display: flex; flex-direction: column; border-left: 1px solid #c6c6c6; }
.gsb button { flex: 1; border-bottom: 1px solid #c6c6c6; }
.gsb button:last-child { border-bottom: 0; }
.gsb .off { background: #e6e6e6; }
.g5 .stack { padding-left: 11px; }
.gap { margin-left: 6px; }
.pan { flex-direction: column; padding-top: 6px; gap: 4px; line-height: 15px; }
.fold { align-self: flex-end; margin: 0 9px 2px auto; }

/* document */
.work { flex: 1; min-height: 0; overflow: hidden; background: #e6e6e6; padding-right: 17px; }
.page { width: 949px; max-width: 100%; margin: 0 auto; min-height: 100%; background: #fff; border: solid #c6c6c6; border-width: 0 1px; padding: 0 140px; font: 17px/25px "Noto Sans", "Noto Sans CJK SC", sans-serif; color: #333; white-space: nowrap; }
.crop { height: 29px; display: flex; justify-content: space-between; margin: 0 -27px; }
.crop i { width: 29px; height: 28px; border: solid #aaa; border-width: 0 1px 1px 0; }
.crop i:last-child { border-width: 0 0 1px 1px; }
.sh { background: #fafafa; padding: 0 2px; }
.ret { width: 11px; height: 10px; display: inline-block; margin-left: 1px; }
table { width: calc(100% - 2px); border-collapse: collapse; margin: 15px 1px 2px; table-layout: fixed; background: #fafafa; }
td { border: 1px solid #000; padding: 0 1px 15px; vertical-align: top; }
.k { width: 25%; vertical-align: middle; }
.flow p { margin-bottom: 15px; }
.lead { padding-left: 5px; }
.q { line-height: 26px; }
.q u { text-underline-offset: 4px; text-decoration-thickness: 1px; text-decoration-skip-ink: none; }
.first { display: flex; }
.first span:first-child { width: 34px; }
.first .full { flex: 1; }
.first .sp { width: auto; }
.full { display: block; font-size: 16px; text-align: justify; text-align-last: justify; text-justify: inter-character; white-space: normal; }

/* status bar */
.status { height: 22px; flex: none; display: flex; align-items: center; background: #f3f3f3; border-top: 1px solid #c6c6c6; padding-left: 8px; gap: 18px; color: #333; }
.views { margin-left: auto; display: flex; align-self: stretch; }
.views button { width: 40px; }
.views .on { background: #c6c6c6; }
.zoom { display: flex; align-items: center; gap: 4px; margin-left: -14px; }
.zoom button { font-size: 16px; width: 10px; }
.zoom input { appearance: none; width: 100px; height: 12px; margin: 0; background: linear-gradient(#aaa, #aaa) 0 6px / 100% 1px no-repeat; }
.zoom input::-webkit-slider-thumb { appearance: none; width: 5px; height: 11px; background: #666; }
.pct { width: 40px; margin-left: -6px; }
```
